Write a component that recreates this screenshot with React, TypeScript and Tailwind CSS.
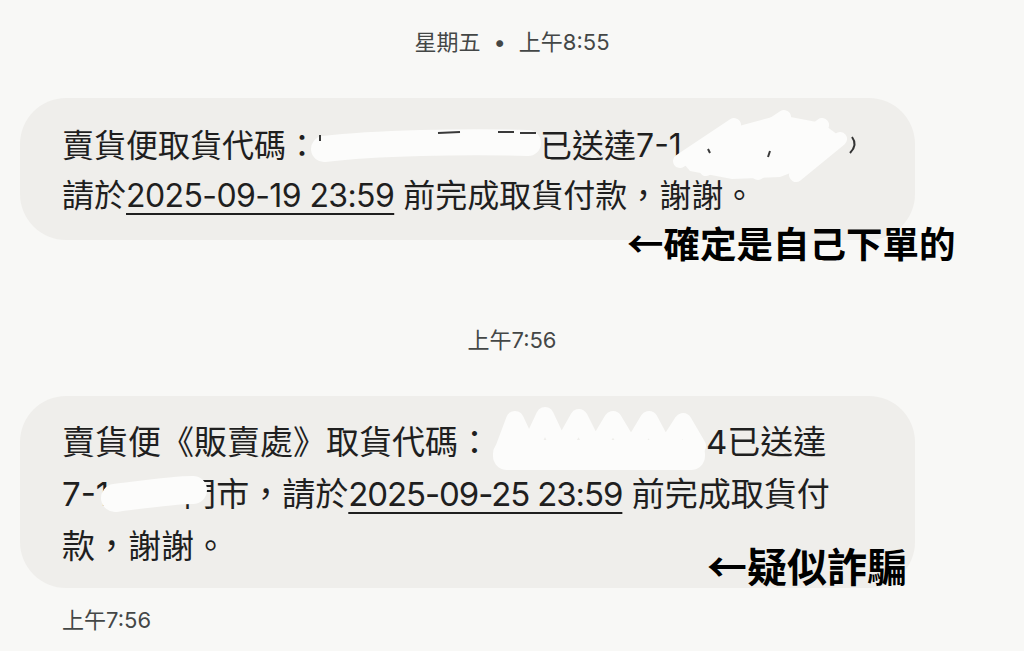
const WHITE = "#fcfcfb";

function Stamp({ children, left }: { children: React.ReactNode; left?: boolean }) {
  return (
    <div
      className={
        left
          ? "h-[28px] pl-[62px] text-[22px] leading-[28px] text-[#444746]"
          : "h-[28px] text-center text-[22px] leading-[28px] text-[#444746]"
      }
    >
      {children}
    </div>
  );
}

function DateLink({ children, tight }: { children: React.ReactNode; tight?: boolean }) {
  return (
    <span
      className={
        tight
          ? "underline decoration-2 underline-offset-[6px] tracking-[-1.1px]"
          : "underline decoration-2 underline-offset-[6px] tracking-[-0.6px]"
      }
    >
      {children}
    </span>
  );
}

export default function App() {
  return (
    <div className="w-[1024px] h-[651px] overflow-hidden bg-[#f8f8f6] pt-[28px] text-[#1f1f1f] font-['Inter','Noto_Sans_CJK_TC',sans-serif]">
      <Stamp>
        星期五<span className="mx-[13px]">•</span>上午8:55
      </Stamp>

      {/* first message */}
      <div className="relative mt-[42px] ml-[20px] w-[895px] rounded-[46px] bg-[#efeeeb] pl-[42px] pt-[23px] pb-[19px] text-[32px] leading-[50px] whitespace-nowrap">
        <div>
          賣貨便取貨代碼：
          <svg width="226" height="50" className="relative z-10 inline-block align-top ml-[-4px] overflow-visible">
            <path d="M10,28 C60,22 150,20 214,22" stroke={WHITE} strokeWidth="26" strokeLinecap="round" fill="none" />
            <path d="M6,14 L6,20 M124,12 L146,11 M184,11 L200,11 M206,12 L222,12" stroke="#3a3a3a" strokeWidth="2" fill="none" />
          </svg>
          已送達7-1
          <svg width="172" height="50" className="relative z-10 inline-block align-top ml-[-10px] overflow-visible">
            <polygon points="6,36 56,8 108,-6 150,2 166,14 150,40 108,56 60,58 18,50" fill={WHITE} />
            <path
              d="M8,40 L62,4 L34,48 L112,-4 L86,52 L150,4 L124,54 L168,18"
              stroke={WHITE}
              strokeWidth="14"
              strokeLinecap="round"
              strokeLinejoin="round"
              fill="none"
            />
            <path d="M36,28 L38,32 M98,30 L96,36" stroke="#3a3a3a" strokeWidth="2" fill="none" />
            <path d="M180,16 Q186,24 178,32" stroke="#333" strokeWidth="2" fill="none" />
          </svg>
        </div>
        <div>
          請於<DateLink>2025-09-19 23:59</DateLink> 前完成取貨付款，謝謝。
        </div>
        <div className="absolute left-[607px] top-[126px] text-[36.5px] leading-[37px] font-bold text-black font-['Noto_Sans_CJK_TC',sans-serif]">
          ←確定是自己下單的
        </div>
      </div>

      <div className="mt-[86px]">
        <Stamp>上午7:56</Stamp>
      </div>

      {/* second message */}
      <div className="relative mt-[42px] ml-[20px] w-[895px] rounded-[46px] bg-[#efeeeb] pl-[42px] pt-[20px] pb-[16px] text-[33px] leading-[52px] whitespace-nowrap">
        <div>
          賣貨便《販賣處》取貨代碼：
          <svg width="215" height="52" className="relative z-10 inline-block align-top overflow-visible">
            <rect x="2" y="24" width="212" height="30" rx="14" fill={WHITE} />
            <path
              d="M12,36 L24,4 L38,34 L54,0 L70,34 L88,2 L104,34 L122,4 L140,34 L158,4 L174,34 L192,6 L206,30"
              stroke={WHITE}
              strokeWidth="18"
              strokeLinecap="round"
              strokeLinejoin="round"
              fill="none"
            />
          </svg>
          4已送達
        </div>
        <div>
          7-1
          <svg width="76" height="52" className="relative z-10 inline-block align-top ml-[-2px] overflow-visible">
            <path d="M8,30 C40,26 66,22 86,22" stroke={WHITE} strokeWidth="28" strokeLinecap="round" fill="none" />
          </svg>
          門市，請於<DateLink tight>2025-09-25 23:59</DateLink> 前完成取貨付
        </div>
        <div>款，謝謝。</div>
        <div className="absolute left-[687px] top-[149px] text-[40px] leading-[40px] font-bold text-black font-['Noto_Sans_CJK_TC',sans-serif]">
          ←疑似詐騙
        </div>
      </div>

      <div className="mt-[18px]">
        <Stamp left>上午7:56</Stamp>
      </div>
    </div>
  );
}
